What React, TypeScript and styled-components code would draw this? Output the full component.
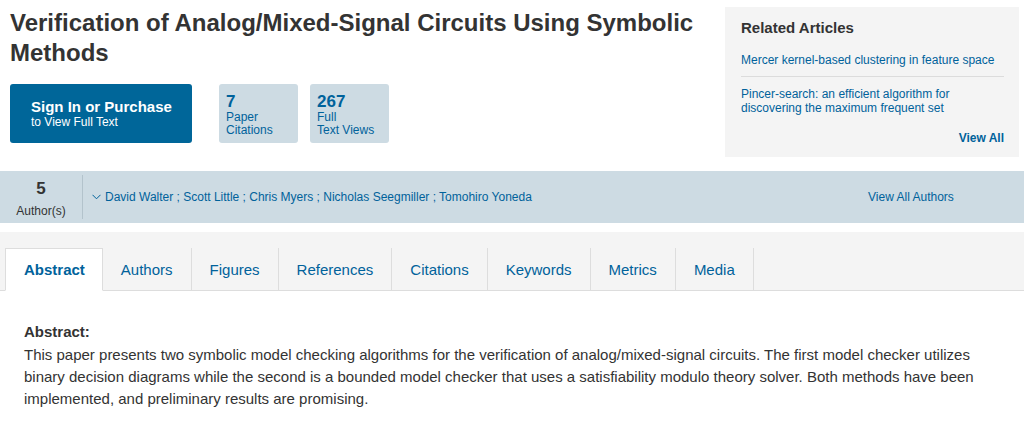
import React from "react";
import styled, { createGlobalStyle } from "styled-components";

const GlobalStyle = createGlobalStyle`
  body {
    margin: 0;
    background: #fff;
    font-family: "Liberation Sans", Arial, sans-serif;
    color: #333;
  }
  a {
    text-decoration: none;
  }
`;

const Header = styled.div`
  display: flex;
  align-items: flex-start;
  padding: 0 5px 0 10px;
`;

const TitleColumn = styled.div`
  flex: 1;
  padding-right: 20px;
`;

const Title = styled.h1`
  margin: 8px 0 0;
  font-size: 24px;
  line-height: 30px;
  font-weight: 700;
  color: #333;
`;

const ActionRow = styled.div`
  display: flex;
  margin-top: 16px;
  gap: 12px;
`;

const PurchaseButton = styled.a`
  box-sizing: border-box;
  width: 182px;
  height: 59px;
  margin-right: 15px;
  padding: 14px 0 0 21px;
  background: #006699;
  border-radius: 3px;
  color: #fff;

  .main {
    display: block;
    font-size: 15px;
    line-height: 17px;
    font-weight: 700;
  }
  .sub {
    display: block;
    font-size: 12px;
    line-height: 14px;
  }
`;

const MetricBox = styled.div`
  box-sizing: border-box;
  width: 79px;
  height: 59px;
  padding: 9px 7px 0;
  background: #cddbe3;
  border-radius: 3px;
  color: #00629b;

  .value {
    font-size: 17px;
    line-height: 18px;
    font-weight: 700;
  }
  .label {
    font-size: 12px;
    line-height: 13px;
  }
`;

const RelatedPanel = styled.aside`
  box-sizing: border-box;
  flex: 0 0 294px;
  height: 150px;
  margin-top: 7px;
  padding: 12px 15px 0 16px;
  background: #f4f4f4;
`;

const PanelTitle = styled.h2`
  margin: 0 0 13px;
  font-size: 15px;
  line-height: 18px;
  font-weight: 700;
  color: #333;
`;

const RelatedLink = styled.a`
  display: block;
  font-size: 12px;
  line-height: 14px;
  color: #00629b;
  padding: 3px 0 9px;

  & + & {
    border-top: 1px solid #dcdcdc;
    padding-top: 10px;
  }
`;

const ViewAll = styled.a`
  display: block;
  margin-top: 7px;
  text-align: right;
  font-size: 12px;
  line-height: 14px;
  font-weight: 700;
  color: #00629b;
`;

const AuthorsBar = styled.div`
  display: flex;
  align-items: center;
  height: 52px;
  margin-top: 14px;
  background: #cddbe3;
`;

const AuthorCount = styled.div`
  box-sizing: border-box;
  width: 83px;
  height: 44px;
  padding-top: 4px;
  border-right: 1px solid #b3c3cc;
  text-align: center;
  color: #333;

  .num {
    font-size: 17px;
    line-height: 20px;
    font-weight: 700;
  }
  .lbl {
    font-size: 12px;
    line-height: 14px;
    margin-top: 5px;
  }
`;

const AuthorNames = styled.div`
  flex: 1;
  display: flex;
  align-items: center;
  gap: 4px;
  padding-left: 9px;
  font-size: 12px;
  color: #00629b;
`;

const ViewAllAuthors = styled.a`
  width: 156px;
  font-size: 12px;
  color: #00629b;
`;

const TabSection = styled.div`
  margin-top: 9px;
  padding: 16px 0 0 5px;
  background: #f4f4f4;
  border-bottom: 1px solid #dddddd;
`;

const TabList = styled.div`
  display: flex;
`;

const Tab = styled.div<{ $active?: boolean }>`
  box-sizing: border-box;
  height: 43px;
  margin-bottom: -1px;
  padding: 0 18px;
  display: flex;
  align-items: center;
  font-size: 15px;
  color: #00629b;
  border-right: 1px solid #dddddd;
  background: ${(p) => (p.$active ? "#fff" : "transparent")};
  font-weight: ${(p) => (p.$active ? 700 : 400)};
  ${(p) =>
    p.$active &&
    `
    border: 1px solid #dddddd;
    border-bottom: 1px solid #fff;
    padding: 0 17px 0 18px;
  `}
`;

const AbstractBlock = styled.section`
  padding: 32px 40px 0 24px;
  font-size: 15px;
  line-height: 22px;
  color: #333;

  h3 {
    margin: 0;
    font-size: 15px;
    line-height: 18px;
    font-weight: 700;
  }
  p {
    margin: 3px 0 0;
  }
`;

const Chevron = () => (
  <svg width="9" height="6" viewBox="0 0 9 6" fill="none">
    <path d="M0.5 0.8 L4.5 4.8 L8.5 0.8" stroke="#00629b" strokeWidth="1" />
  </svg>
);

const tabs = ["Abstract", "Authors", "Figures", "References", "Citations", "Keywords", "Metrics", "Media"];
const authors = ["David Walter", "Scott Little", "Chris Myers", "Nicholas Seegmiller", "Tomohiro Yoneda"];

export default function App() {
  return (
    <>
      <GlobalStyle />
      <Header>
        <TitleColumn>
          <Title>Verification of Analog/Mixed-Signal Circuits Using Symbolic Methods</Title>
          <ActionRow>
            <PurchaseButton href="#">
              <span className="main">Sign In or Purchase</span>
              <span className="sub">to View Full Text</span>
            </PurchaseButton>
            <MetricBox>
              <div className="value">7</div>
              <div className="label">Paper</div>
              <div className="label">Citations</div>
            </MetricBox>
            <MetricBox>
              <div className="value">267</div>
              <div className="label">Full</div>
              <div className="label">Text Views</div>
            </MetricBox>
          </ActionRow>
        </TitleColumn>
        <RelatedPanel>
          <PanelTitle>Related Articles</PanelTitle>
          <RelatedLink href="#">Mercer kernel-based clustering in feature space</RelatedLink>
          <RelatedLink href="#">
            Pincer-search: an efficient algorithm for
            <br />
            discovering the maximum frequent set
          </RelatedLink>
          <ViewAll href="#">View All</ViewAll>
        </RelatedPanel>
      </Header>

      <AuthorsBar>
        <AuthorCount>
          <div className="num">5</div>
          <div className="lbl">Author(s)</div>
        </AuthorCount>
        <AuthorNames>
          <Chevron />
          <span>{authors.join(" ; ")}</span>
        </AuthorNames>
        <ViewAllAuthors href="#">View All Authors</ViewAllAuthors>
      </AuthorsBar>

      <TabSection>
        <TabList>
          {tabs.map((t, i) => (
            <Tab key={t} $active={i === 0}>
              {t}
            </Tab>
          ))}
        </TabList>
      </TabSection>

      <AbstractBlock>
        <h3>Abstract:</h3>
        <p>
          This paper presents two symbolic model checking algorithms for the verification of analog/mixed-signal
          circuits. The first model checker utilizes binary decision diagrams while the second is a bounded model
          checker that uses a satisfiability modulo theory solver. Both methods have been implemented, and preliminary
          results are promising.
        </p>
      </AbstractBlock>
    </>
  );
}
